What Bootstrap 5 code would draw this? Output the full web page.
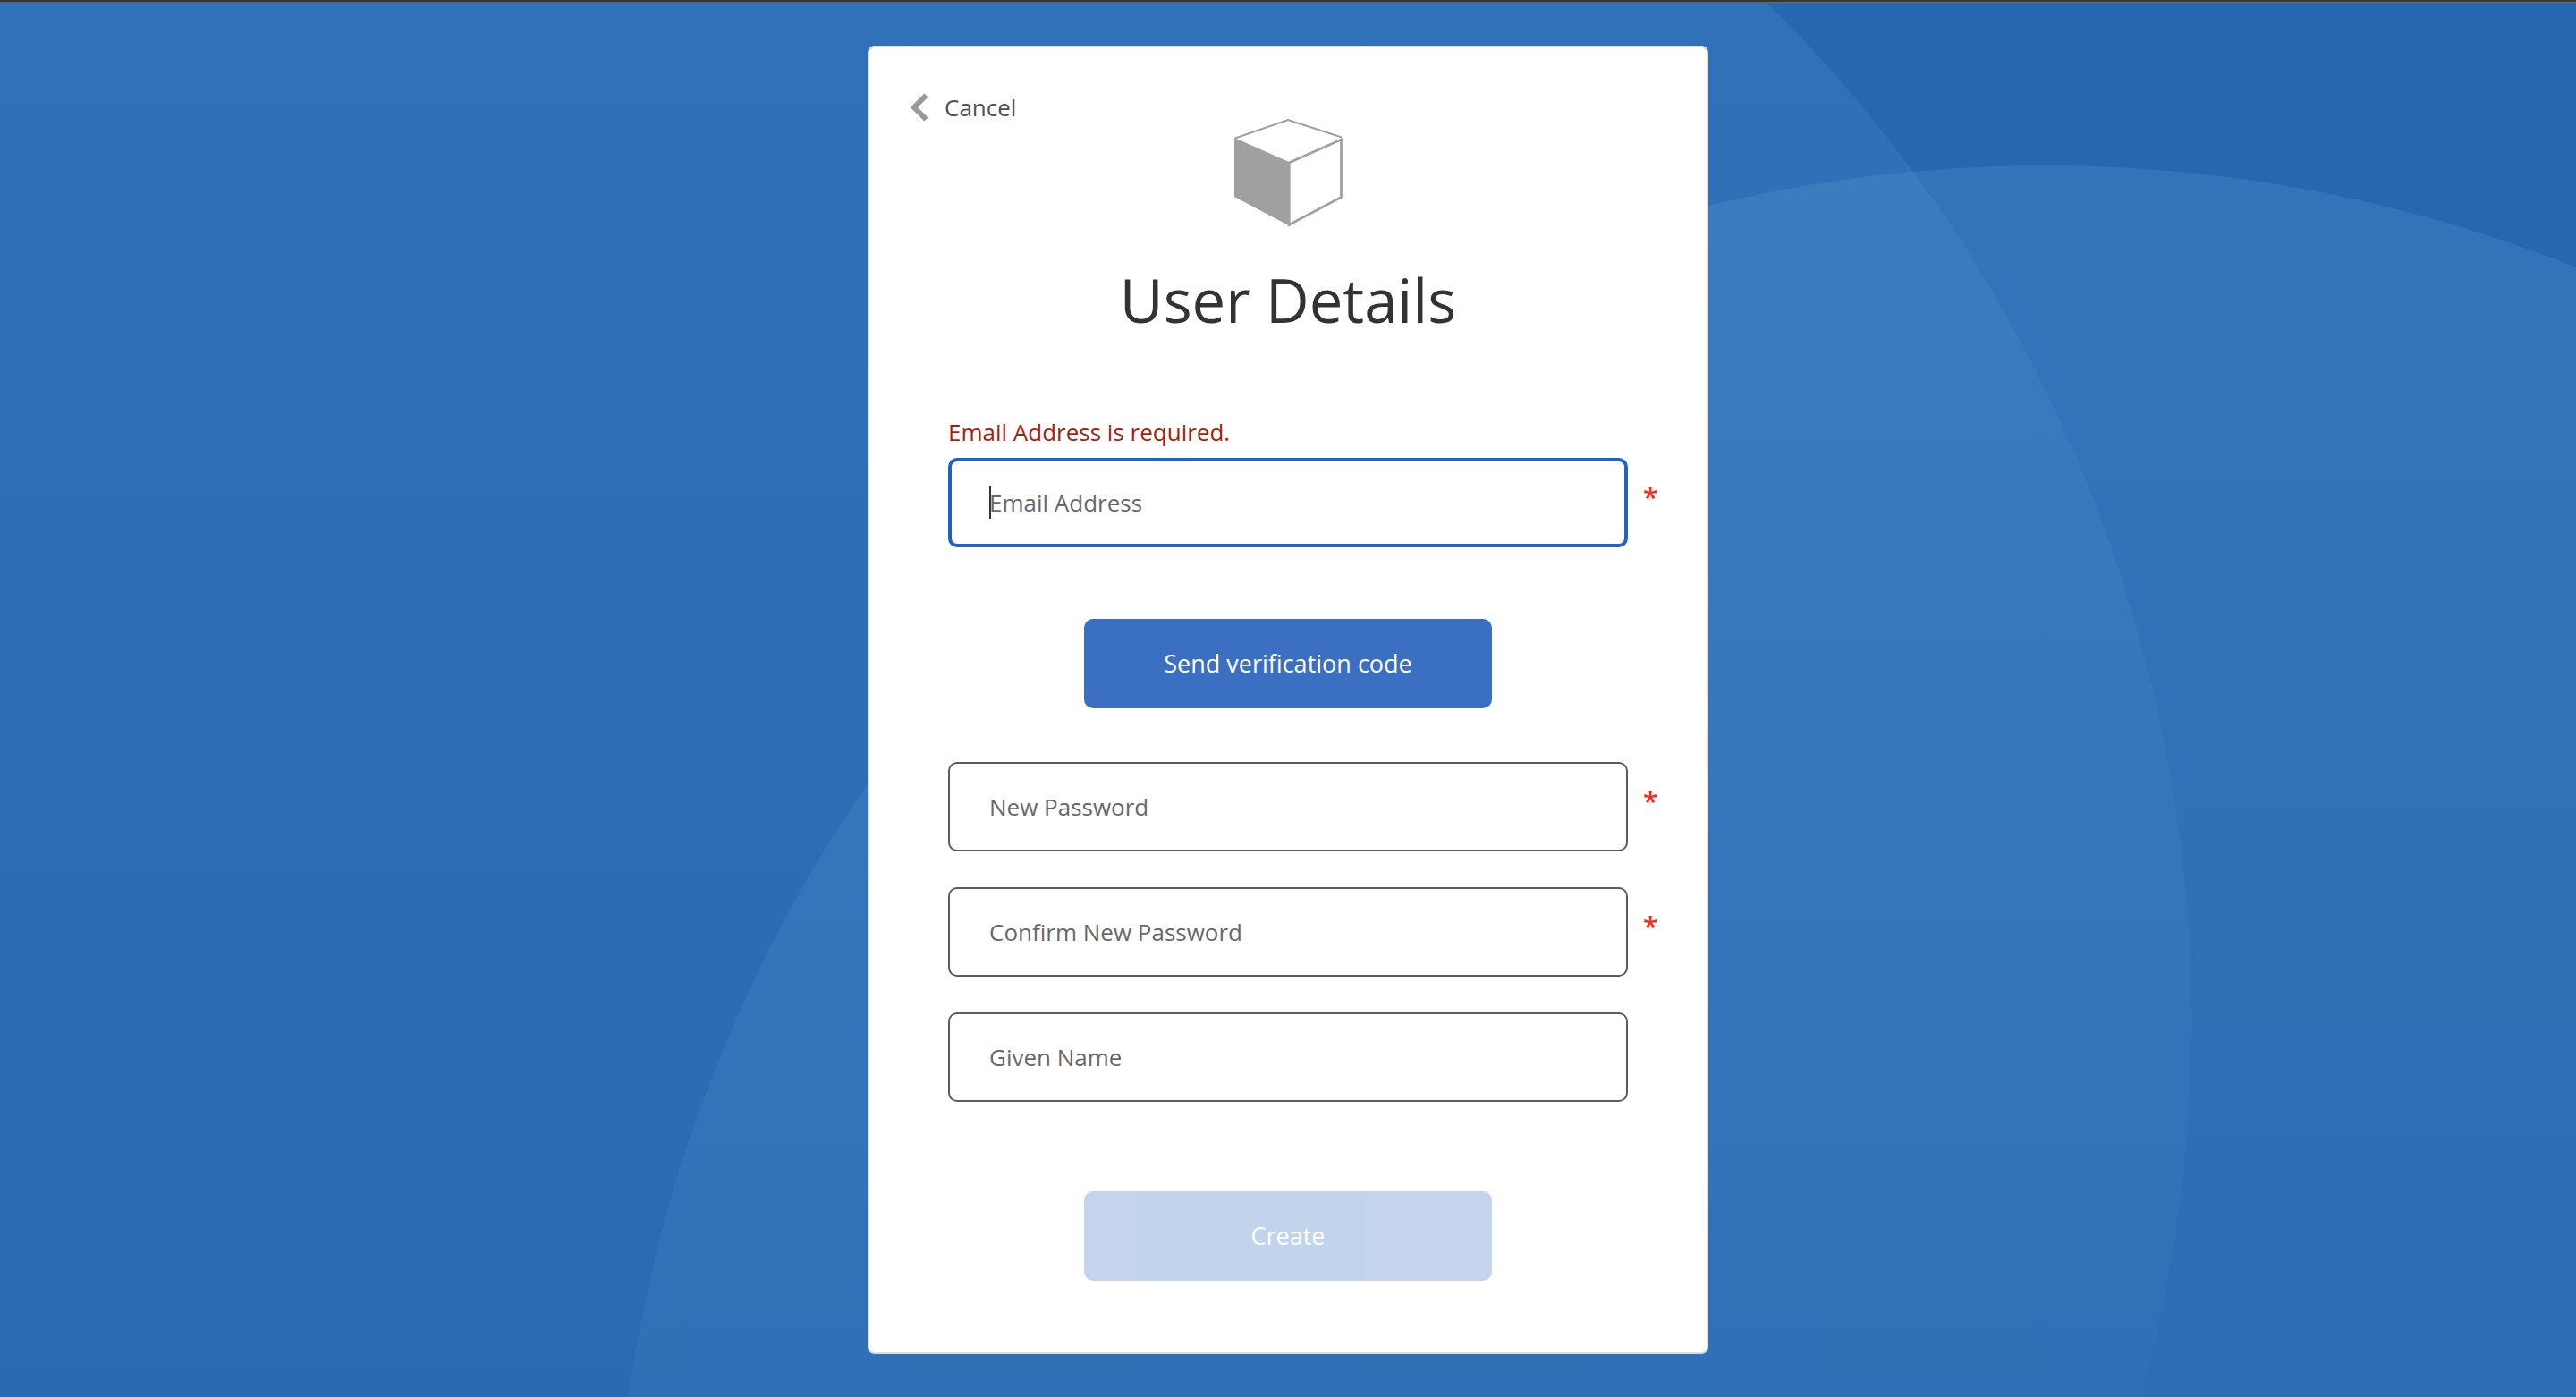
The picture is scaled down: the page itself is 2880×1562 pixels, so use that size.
<!DOCTYPE html>
<html lang="en">
<head>
<meta charset="utf-8">
<meta name="viewport" content="width=device-width, initial-scale=1">
<title>User Details</title>
<link href="https://cdn.jsdelivr.net/npm/bootstrap@5.3.0/dist/css/bootstrap.min.css" rel="stylesheet">
<style>
  body { font-family: "Open Sans", "Noto Sans", sans-serif; font-size: 26px; line-height: 40px; color: #333; background: #2767b2; }
  .backdrop { position: fixed; inset: 0; z-index: -1; width: 100%; height: 100%; }
  .top-rule { height: 4px; border-top: 2px solid #363636; background: #666; }
  .panel { width: 940px; max-width: 100%; margin: 47px 0; border: 2px solid #ddd; border-radius: 8px; padding: 47px 46px 80px; background: #fff; }
  .cancel-btn { font-size: 26px; line-height: 40px; color: #505050; gap: 18px; }
  .cube { width: 122px; height: 122px; margin-top: -8px; }
  .heading { font-size: 67px; line-height: 96px; font-weight: 400; color: #333; margin: 33px 0 80px; }
  .fields { padding: 0 42px; }
  .stack { gap: 40px; margin: 60px 0 100px; }
  .error-text { color: #a61e0c; margin-bottom: 9px; }
  .field-input { height: 100px; font-size: 26px; line-height: 40px; padding: 0 44px; border: 2px solid #5c5c5c; border-radius: 10px; color: #333; background: #fff; }
  .field-input::placeholder { color: #686868; opacity: 1; }
  .field-input:focus, .field-input.active { border: 4px solid #2261c6; padding: 0 42px; box-shadow: none; }
  .caret { left: 46px; top: 31px; width: 2px; height: 37px; background: #333; }
  .required-mark { left: 100%; top: 22px; margin-left: 17px; color: #ee3024; font-size: 30px; line-height: 44px; font-weight: 600; }
  .action-btn { width: 456px; height: 100px; font-size: 27px; border: 0; border-radius: 10px; color: #fff; background: #3a6fc1; }
  .email-action { margin-top: 80px; }
  .action-btn:disabled { background: #3a6fc1; color: #fff; opacity: .3; }
</style>
</head>
<body>
<svg class="backdrop" viewBox="0 0 2880 1562" preserveAspectRatio="xMidYMid slice" aria-hidden="true">
  <defs>
    <linearGradient id="glowLeft" gradientUnits="userSpaceOnUse" x1="0" y1="0" x2="0" y2="1562">
      <stop offset="0" stop-color="#80ccf8" stop-opacity=".1"/>
      <stop offset="1" stop-color="#80ccf8" stop-opacity=".03"/>
    </linearGradient>
    <linearGradient id="glowRight" gradientUnits="userSpaceOnUse" x1="0" y1="185" x2="0" y2="1562">
      <stop offset="0" stop-color="#88ccec" stop-opacity=".13"/>
      <stop offset="1" stop-color="#88ccec" stop-opacity=".06"/>
    </linearGradient>
  </defs>
  <rect width="2880" height="1562" fill="#2767b2"/>
  <circle cx="850" cy="1140" r="1600" fill="url(#glowLeft)"/>
  <circle cx="2287" cy="1785" r="1600" fill="url(#glowRight)"/>
</svg>
<div class="top-rule"></div>
<main class="d-flex justify-content-center">
  <div class="panel">
    <button type="button" class="cancel-btn btn p-0 d-flex align-items-center border-0">
      <svg width="20" height="32" viewBox="0 0 20 32" aria-hidden="true"><path d="M17.500 2.500L4 16l13.500 13.500" fill="none" stroke="#999" stroke-width="6"/></svg>Cancel
    </button>
    <svg class="cube d-block mx-auto" viewBox="0 0 122 122" aria-hidden="true">
      <path d="M2 22.500L61 2l60 19.500" fill="none" stroke="#a0a0a0" stroke-width="2"/>
      <path d="M1 22L61 48.500l2.500 2V121L1 88z" fill="#a0a0a0"/>
      <path d="M62 50l58.500-26v64.500L62 119.500z" fill="none" stroke="#a0a0a0" stroke-width="2.700"/>
    </svg>
    <h1 class="heading text-center">User Details</h1>
    <form class="fields" novalidate>
      <div id="emailError" class="error-text">Email Address is required.</div>
      <div class="position-relative">
        <input type="email" class="form-control field-input active" placeholder="Email Address" aria-label="Email Address" aria-describedby="emailError" required>
        <span class="caret position-absolute"></span>
        <span class="required-mark position-absolute" aria-hidden="true">*</span>
      </div>
      <button type="button" class="btn action-btn email-action d-block mx-auto">Send verification code</button>
      <div class="stack d-flex flex-column">
        <div class="position-relative">
          <input type="password" class="form-control field-input" placeholder="New Password" aria-label="New Password" required>
          <span class="required-mark position-absolute" aria-hidden="true">*</span>
        </div>
        <div class="position-relative">
          <input type="password" class="form-control field-input" placeholder="Confirm New Password" aria-label="Confirm New Password" required>
          <span class="required-mark position-absolute" aria-hidden="true">*</span>
        </div>
        <input type="text" class="form-control field-input" placeholder="Given Name" aria-label="Given Name">
      </div>
      <button type="submit" class="btn action-btn d-block mx-auto" disabled>Create</button>
    </form>
  </div>
</main>
<script src="https://cdn.jsdelivr.net/npm/bootstrap@5.3.0/dist/js/bootstrap.bundle.min.js"></script>
</body>
</html>
